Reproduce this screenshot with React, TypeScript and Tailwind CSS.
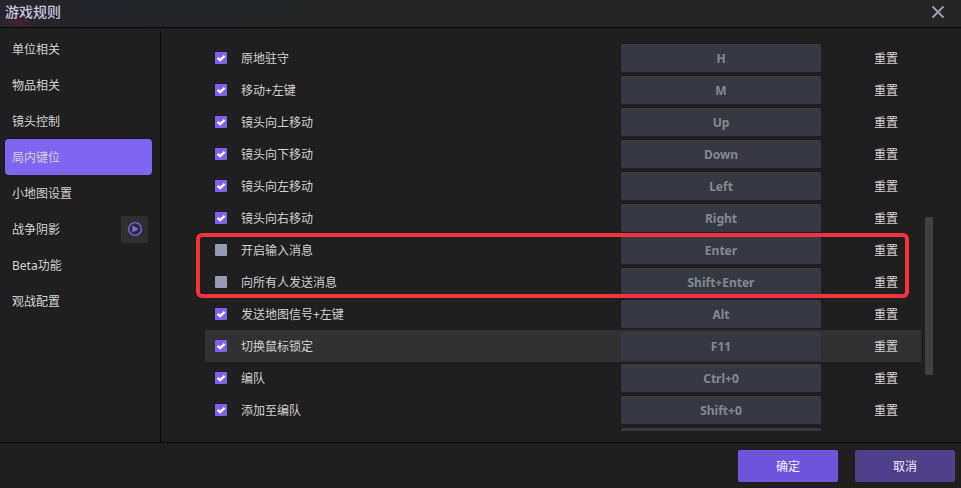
import { useState } from "react";

interface KeyBinding {
  id: string;
  label: string;
  keys: string;
  enabled: boolean;
}

const tabs = [
  { id: "unit", label: "单位相关" },
  { id: "item", label: "物品相关" },
  { id: "camera", label: "镜头控制" },
  { id: "keys", label: "局内键位" },
  { id: "minimap", label: "小地图设置" },
  { id: "fog", label: "战争阴影", video: true },
  { id: "beta", label: "Beta功能" },
  { id: "watch", label: "观战配置" },
];

const defaultBindings: KeyBinding[] = [
  { id: "hold", label: "原地驻守", keys: "H", enabled: true },
  { id: "move", label: "移动+左键", keys: "M", enabled: true },
  { id: "up", label: "镜头向上移动", keys: "Up", enabled: true },
  { id: "down", label: "镜头向下移动", keys: "Down", enabled: true },
  { id: "left", label: "镜头向左移动", keys: "Left", enabled: true },
  { id: "right", label: "镜头向右移动", keys: "Right", enabled: true },
  { id: "chat", label: "开启输入消息", keys: "Enter", enabled: false },
  { id: "chat-all", label: "向所有人发送消息", keys: "Shift+Enter", enabled: false },
  { id: "signal", label: "发送地图信号+左键", keys: "Alt", enabled: true },
  { id: "mouse-lock", label: "切换鼠标锁定", keys: "F11", enabled: true },
  { id: "group", label: "编队", keys: "Ctrl+0", enabled: true },
  { id: "group-add", label: "添加至编队", keys: "Shift+0", enabled: true },
  { id: "unset", label: "", keys: "", enabled: true },
];

function PlayIcon() {
  return (
    <svg viewBox="0 0 16 16" className="size-4" fill="none">
      <circle cx="8" cy="8" r="6.4" stroke="#7b61ec" strokeWidth="1.4" />
      <path d="M5.8 5v6l5.2-3z" fill="#7b61ec" stroke="#7b61ec" strokeWidth="0.8" strokeLinejoin="round" />
    </svg>
  );
}

function BindingRow({
  binding,
  hovered,
  onToggle,
}: {
  binding: KeyBinding;
  hovered: boolean;
  onToggle: () => void;
}) {
  return (
    <div className={`flex h-8 items-center pl-2.5 ${hovered ? "bg-[#313131]" : ""}`}>
      <label className="flex flex-1 items-center gap-2">
        <span className="grid size-3 place-items-center">
          <input
            type="checkbox"
            checked={binding.enabled}
            onChange={onToggle}
            className="peer col-start-1 row-start-1 size-3 appearance-none rounded-[1px] bg-[#959bb3] checked:bg-[#7c62ee]"
          />
          <svg
            viewBox="0 0 12 12"
            className="pointer-events-none invisible col-start-1 row-start-1 size-3 peer-checked:visible"
            fill="none"
          >
            <path d="M2.5 5.9l2.6 2.3 4.5-4.3" stroke="#fff" strokeWidth="2.3" />
          </svg>
        </span>
        <span className="px-1.5 pt-0.5">{binding.label}</span>
      </label>
      <input
        type="text"
        readOnly
        value={binding.keys}
        aria-label={binding.label}
        className="h-7 w-[200px] rounded-[2px] bg-[#363943] text-center font-bold text-[#858890] outline-none"
      />
      <div className="w-[100px] pl-[53px] pt-0.5">
        {binding.keys && <button>重置</button>}
      </div>
    </div>
  );
}

export default function App() {
  const [activeTab, setActiveTab] = useState("keys");
  const [bindings, setBindings] = useState(defaultBindings);

  const toggleBinding = (id: string) => {
    setBindings((prev) =>
      prev.map((b) => (b.id === id ? { ...b, enabled: !b.enabled } : b))
    );
  };

  return (
    <div className="flex h-screen flex-col bg-[#1f1f1f] font-['Noto_Sans','Noto_Sans_CJK_SC',sans-serif] text-[12px] leading-4 text-[#d2d2d2]">
      <header className="flex h-7 shrink-0 items-center justify-between border-b border-[#080808] bg-[#252525] bg-[radial-gradient(ellipse_20px_12px_at_20px_22px,#46202c,transparent),linear-gradient(to_right,#26242a,#222428_15%,#252525_35%)] pb-1 pl-[5px] pr-4">
        <h1 className="text-[14px] font-medium leading-5 text-[#c3c7e0]">游戏规则</h1>
        <button aria-label="关闭">
          <svg viewBox="0 0 14 14" className="size-3.5" fill="none">
            <path d="M1.5 1.5l11 11M12.5 1.5l-11 11" stroke="#9ea3bd" strokeWidth="1.8" />
          </svg>
        </button>
      </header>

      <div className="flex min-h-0 flex-1">
        <nav className="mt-[3px] w-[161px] shrink-0 border-r border-[#080808] pl-[5px] pr-2">
          {tabs.map((tab) => (
            <button
              key={tab.id}
              onClick={() => setActiveTab(tab.id)}
              className={`flex h-9 w-full items-center justify-between rounded-[4px] pl-[7px] pr-1 ${
                activeTab === tab.id ? "bg-[#8064f2]" : ""
              }`}
            >
              <span className="pt-0.5">{tab.label}</span>
              {tab.video && (
                <span className="grid size-[27px] place-items-center rounded-[2px] bg-[#2f2f2f]">
                  <PlayIcon />
                </span>
              )}
            </button>
          ))}
        </nav>

        <main className="flex min-w-0 flex-1 gap-1 pb-[11px] pl-11 pr-7 pt-3.5">
          <div className="relative min-w-0 flex-1">
            <div className="h-full overflow-hidden">
              {bindings.map((binding) => (
                <BindingRow
                  key={binding.id}
                  binding={binding}
                  hovered={binding.id === "mouse-lock"}
                  onToggle={() => toggleBinding(binding.id)}
                />
              ))}
            </div>
            {/* frame around the two chat bindings */}
            <div className="pointer-events-none absolute -left-[9px] right-3 top-[191px] h-[65px] rounded-[6px] border-4 border-[#f8313f]" />
          </div>
          <div className="flex w-2 flex-col pt-[175px]">
            <div className="h-[158px] rounded-[2px] bg-[#404040]" />
          </div>
        </main>
      </div>

      <footer className="flex shrink-0 justify-end gap-[17px] border-t border-[#080808] pb-1.5 pr-1.5 pt-[7px] text-[#f0eefa]">
        <button className="h-8 w-[100px] rounded-[2px] bg-[#6f54dc] pt-0.5">确定</button>
        <button className="h-8 w-[100px] rounded-[2px] bg-[#4f408c] pt-0.5">取消</button>
      </footer>
    </div>
  );
}
